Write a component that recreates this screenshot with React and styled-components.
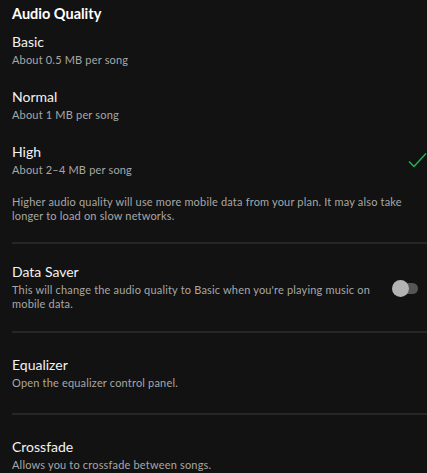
import React from 'react';
import styled, { createGlobalStyle } from 'styled-components';

const GlobalStyle = createGlobalStyle`
  html, body {
    margin: 0;
    padding: 0;
    background: #121212;
  }
  body {
    font-family: Lato, "Noto Sans", sans-serif;
    -webkit-font-smoothing: antialiased;
  }
`;

const Page = styled.div`
  width: 427px;
  height: 473px;
  overflow: hidden;
  background: #121212;
  color: #fff;
  padding-left: 12px;
  box-sizing: border-box;
`;

const Heading = styled.h1`
  margin: 4px 0 0;
  font-size: 14.5px;
  font-weight: 700;
  line-height: 20px;
  color: #fff;
`;

const OptionList = styled.div`
  display: flex;
  flex-direction: column;
  gap: 21px;
  margin-top: 9px;
`;

const Row = styled.div`
  display: flex;
  align-items: center;
  justify-content: space-between;
  padding-right: ${(p) => p.$right || 0}px;
`;

const Text = styled.div`
  display: flex;
  flex-direction: column;
  gap: 2px;
  max-width: ${(p) => p.$max || 'none'};
`;

const Title = styled.div`
  font-size: 14px;
  line-height: 18px;
  color: #f2f2f2;
`;

const Sub = styled.div`
  font-size: 11px;
  line-height: 14px;
  letter-spacing: 0.18px;
  color: #a7a7a7;
`;

const Note = styled.p`
  margin: 18px 12px 0 0;
  font-size: 11px;
  line-height: 14px;
  letter-spacing: 0.18px;
  color: #a7a7a7;
`;

const Divider = styled.hr`
  margin: ${(p) => p.$top}px 0 0;
  border: 0;
  height: 2px;
  background: #262626;
`;

const Section = styled.div`
  padding-top: ${(p) => p.$top}px;
`;

const Toggle = styled.div`
  position: relative;
  flex-shrink: 0;
  width: 26px;
  height: 17px;
  margin-top: 2px;
  &::before {
    content: '';
    position: absolute;
    left: 3px;
    right: 0;
    top: 3px;
    height: 11px;
    border-radius: 6px;
    background: #555;
  }
  &::after {
    content: '';
    position: absolute;
    left: 0;
    top: 0;
    width: 17px;
    height: 17px;
    border-radius: 50%;
    background: #b3b3b3;
  }
`;

const Check = () => (
  <svg width="19" height="16" viewBox="0 0 19 16" fill="none">
    <path d="M1 9.5 L6 14.5 L18 1.5" stroke="#1db954" strokeWidth="1.4" />
  </svg>
);

const options = [
  { title: 'Basic', sub: 'About 0.5 MB per song' },
  { title: 'Normal', sub: 'About 1 MB per song' },
  { title: 'High', sub: 'About 2–4 MB per song', selected: true },
];

export default function App() {
  return (
    <Page>
      <GlobalStyle />
      <Heading>Audio Quality</Heading>
      <OptionList>
        {options.map((o) => (
          <Row key={o.title}>
            <Text>
              <Title>{o.title}</Title>
              <Sub>{o.sub}</Sub>
            </Text>
            {o.selected && <Check />}
          </Row>
        ))}
      </OptionList>
      <Note>
        Higher audio quality will use more mobile data from your plan. It may also take
        longer to load on slow networks.
      </Note>
      <Divider $top={19} />
      <Section $top={19}>
        <Row $right={9}>
          <Text $max="366px">
            <Title>Data Saver</Title>
            <Sub>This will change the audio quality to Basic when you're playing music on mobile data.</Sub>
          </Text>
          <Toggle />
        </Row>
      </Section>
      <Divider $top={20} />
      <Section $top={23}>
        <Text>
          <Title>Equalizer</Title>
          <Sub>Open the equalizer control panel.</Sub>
        </Text>
      </Section>
      <Divider $top={23} />
      <Section $top={23}>
        <Text>
          <Title>Crossfade</Title>
          <Sub>Allows you to crossfade between songs.</Sub>
        </Text>
      </Section>
    </Page>
  );
}
